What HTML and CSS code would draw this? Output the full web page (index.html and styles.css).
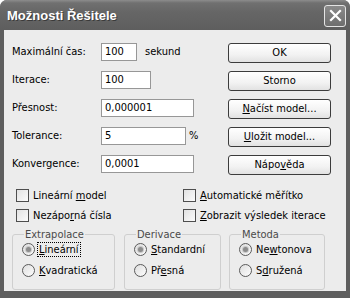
FILE: index.html
```html
<!DOCTYPE html>
<html lang="cs">
<head>
    <meta charset="UTF-8">
    <title>Možnosti Řešitele</title>
    <link rel="stylesheet" href="styles.css">
</head>
<body>
    <div class="window">
        <div class="titlebar">
            <span class="title">Možnosti Řešitele</span>
            <span class="close">
                <svg width="13" height="13" viewBox="0 0 13 13"><path d="M2 2 L11 11 M11 2 L2 11" stroke="#fff" stroke-width="2.2" stroke-linecap="square"/></svg>
            </span>
        </div>
        <div class="content">
            <div class="top">
                <div class="fields">
                    <label>Maximální čas:</label>
                    <div class="cell"><span class="input w-time">100</span><span class="suffix">sekund</span></div>
                    <label>Iterace:</label>
                    <div class="cell"><span class="input w-iter">100</span></div>
                    <label>Přesnost:</label>
                    <div class="cell"><span class="input w-long">0,000001</span></div>
                    <label>Tolerance:</label>
                    <div class="cell"><span class="input w-tol">5</span><span class="pct">%</span></div>
                    <label>Konvergence:</label>
                    <div class="cell"><span class="input w-long">0,0001</span></div>
                </div>
                <div class="buttons">
                    <div class="btn">OK</div>
                    <div class="btn">Storno</div>
                    <div class="btn"><u>N</u>ačíst model...</div>
                    <div class="btn"><u>U</u>ložit model...</div>
                    <div class="btn">Nápo<u>v</u>ěda</div>
                </div>
            </div>
            <div class="checks">
                <div class="check"><span class="box"></span><span>Lineární <u>m</u>odel</span></div>
                <div class="check"><span class="box"></span><span><u>A</u>utomatické měřítko</span></div>
                <div class="check"><span class="box"></span><span>Nezápo<u>r</u>ná čísla</span></div>
                <div class="check"><span class="box"></span><span><u>Z</u>obrazit výsledek iterace</span></div>
            </div>
            <div class="groups">
                <fieldset class="group g-extra">
                    <legend>Extrapolace</legend>
                    <div class="radio"><span class="dot on"></span><span class="focus"><u>L</u>ineární</span></div>
                    <div class="radio"><span class="dot"></span><span><u>K</u>vadratická</span></div>
                </fieldset>
                <fieldset class="group g-deriv">
                    <legend>Derivace</legend>
                    <div class="radio"><span class="dot on"></span><span><u>S</u>tandardní</span></div>
                    <div class="radio"><span class="dot"></span><span>Př<u>e</u>sná</span></div>
                </fieldset>
                <fieldset class="group g-method">
                    <legend>Metoda</legend>
                    <div class="radio"><span class="dot on"></span><span>Ne<u>w</u>tonova</span></div>
                    <div class="radio"><span class="dot"></span><span>S<u>d</u>ružená</span></div>
                </fieldset>
            </div>
        </div>
    </div>
</body>
</html>
```

FILE: styles.css
```css
body {
    margin: 0;
    font-family: "DejaVu Sans Condensed", "DejaVu Sans", sans-serif;
    font-size: 11px;
    color: #000;
    background: #fff;
}
.window {
    width: 350px;
    height: 298px;
    box-sizing: border-box;
    background: #5e5e5e;
    border-radius: 7px 7px 0 0;
    display: flex;
    flex-direction: column;
    padding: 0 4px 7px 4px;
}
.titlebar {
    height: 30px;
    flex: none;
    margin: 0 -4px;
    padding: 0 4px 0 7px;
    display: flex;
    align-items: center;
    justify-content: space-between;
    background: linear-gradient(#8c8c8c 0, #707070 3px, #666 40%, #5e5e5e 100%);
    border-radius: 7px 7px 0 0;
}
.title {
    color: #fff;
    font-family: "Liberation Sans", sans-serif;
    font-weight: bold;
    font-size: 13px;
    text-shadow: 1px 1px #3a3a3a;
}
.close {
    width: 22px;
    height: 22px;
    box-sizing: border-box;
    border: 1px solid #e4e4e4;
    border-radius: 3px;
    background: linear-gradient(#8a8a8a, #6e6e6e);
    display: flex;
    align-items: center;
    justify-content: center;
    margin-top: 1px;
}
.content {
    flex: 1;
    background: #ececec;
    padding: 12px 15px 0 8px;
}
.top {
    display: flex;
}
.fields {
    flex: 1;
    display: grid;
    grid-template-columns: 89px auto;
    grid-auto-rows: 19px;
    row-gap: 9px;
    align-items: center;
}
.cell {
    display: flex;
    align-items: center;
}
.input {
    height: 18px;
    box-sizing: border-box;
    border: 1px solid #979797;
    background: #fff;
    padding: 0 3px;
    line-height: 16px;
}
.w-time { width: 36px; }
.w-iter { width: 50px; }
.w-long { width: 93px; }
.w-tol { width: 85px; }
.suffix { margin-left: 8px; }
.pct { margin-left: 3px; }
.buttons {
    width: 103px;
    display: flex;
    flex-direction: column;
    gap: 8px;
    margin-top: 1px;
}
.btn {
    height: 20px;
    box-sizing: border-box;
    border: 1px solid #3c3c3c;
    border-radius: 3px;
    background: linear-gradient(#fff, #f2f2f2 60%, #e2e2e2);
    text-align: center;
    line-height: 18px;
}
.checks {
    display: grid;
    grid-template-columns: 167px auto;
    grid-auto-rows: 13px;
    row-gap: 7px;
    margin: 14px 0 0 4px;
}
.check {
    display: flex;
    align-items: center;
    gap: 4px;
}
.box {
    width: 13px;
    height: 13px;
    box-sizing: border-box;
    border: 1px solid #4e4e4e;
    background: linear-gradient(135deg, #e2e2e2, #fbfbfb);
}
.groups {
    display: flex;
    gap: 8px;
    margin-top: 6px;
}
.group {
    margin: 0;
    padding: 1px 0 11px 9px;
    border: 1px solid #cfcfcf;
    border-radius: 3px;
    box-sizing: border-box;
}
.group legend {
    padding: 0 1px;
    margin-left: 2px;
    line-height: 13px;
    color: #4a4a4a;
}
.g-extra { width: 103px; margin-right: 1px; }
.g-deriv { width: 97px; }
.g-method { width: 96px; }
.radio {
    display: flex;
    align-items: center;
    gap: 4px;
    height: 15px;
}
.radio + .radio {
    margin-top: 6px;
}
.dot {
    width: 13px;
    height: 13px;
    box-sizing: border-box;
    border: 1px solid #5a5a5a;
    border-radius: 50%;
    background: linear-gradient(135deg, #dedede, #fdfdfd);
    display: flex;
    align-items: center;
    justify-content: center;
}
.dot.on::after {
    content: "";
    width: 5px;
    height: 5px;
    border-radius: 50%;
    background: #8c8c8c;
    box-shadow: 0 0 1px 1px #c4c4c4;
}
.focus {
    outline: 1px dotted #000;
    padding: 0 1px;
    margin-left: -1px;
}
```
